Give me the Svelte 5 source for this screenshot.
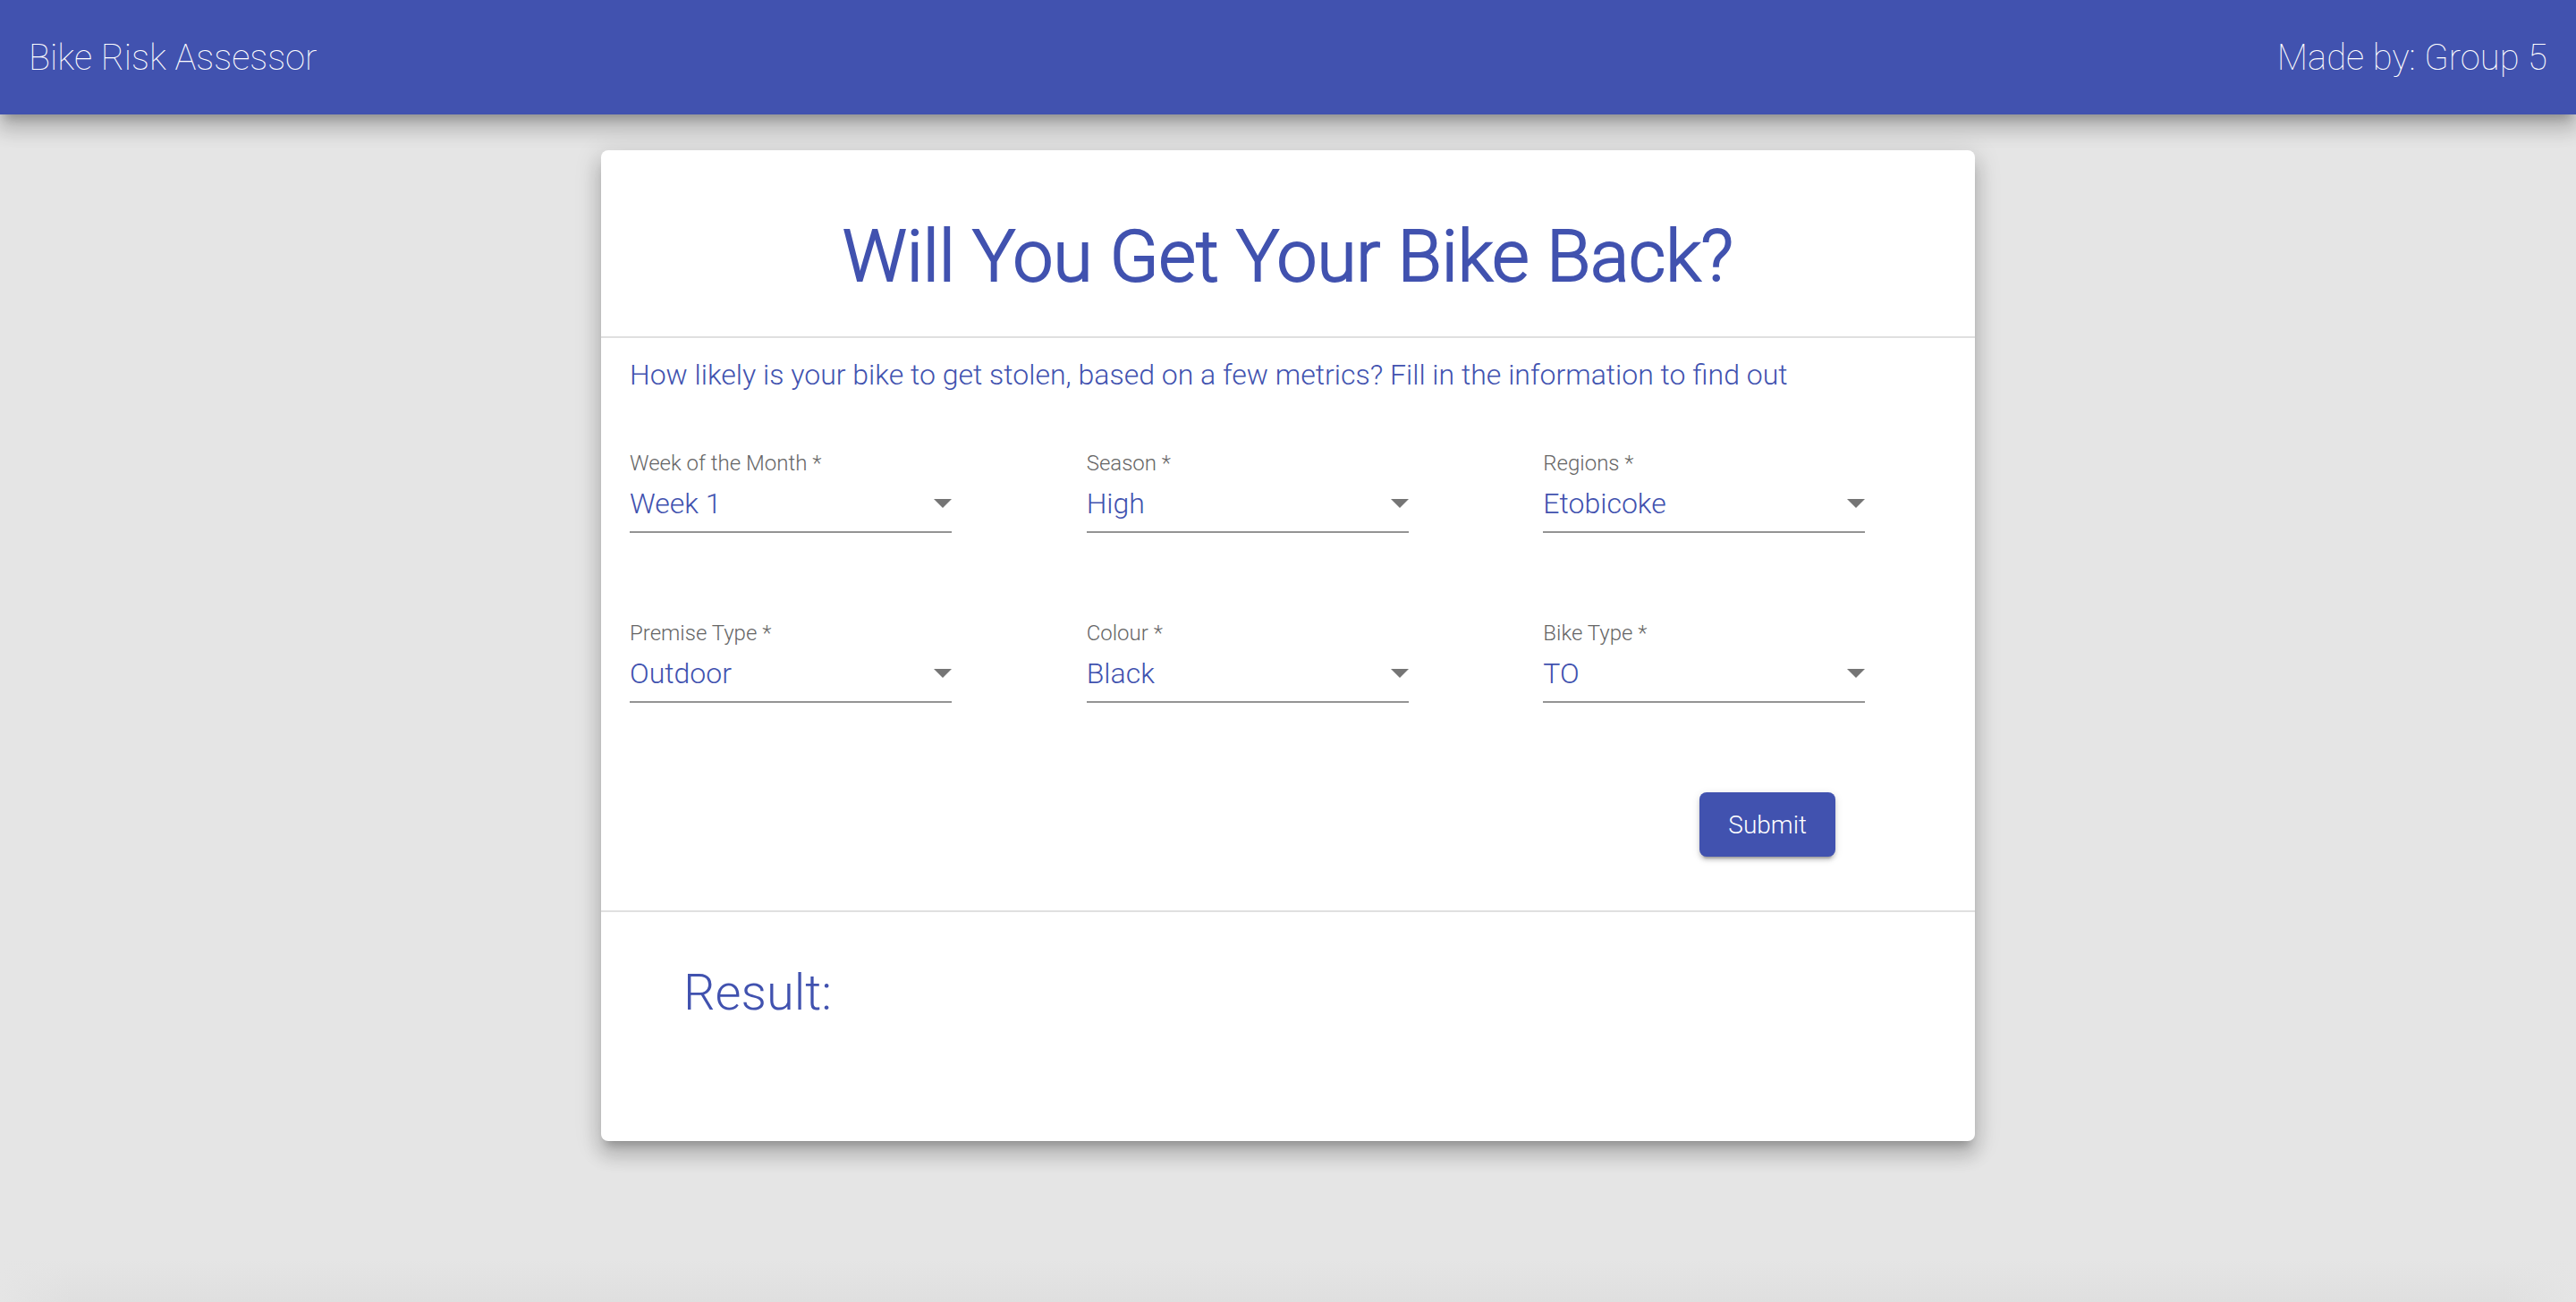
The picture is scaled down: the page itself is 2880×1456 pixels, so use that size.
<script>
  let fields = $state([
    { id: 'week', label: 'Week of the Month', value: 'Week 1', options: ['Week 1', 'Week 2', 'Week 3', 'Week 4'] },
    { id: 'season', label: 'Season', value: 'High', options: ['High', 'Low'] },
    { id: 'region', label: 'Regions', value: 'Etobicoke', options: ['Etobicoke', 'North York', 'Scarborough'] },
    { id: 'premise', label: 'Premise Type', value: 'Outdoor', options: ['Outdoor', 'House', 'Apartment'] },
    { id: 'colour', label: 'Colour', value: 'Black', options: ['Black', 'Blue', 'Red', 'White'] },
    { id: 'bike', label: 'Bike Type', value: 'TO', options: ['TO', 'MT', 'RG', 'RC'] }
  ]);

  function submit(event) {
    event.preventDefault();
  }
</script>

<div class="page">
  <header class="toolbar">
    <span>Bike Risk Assessor</span>
    <span>Made by: Group 5</span>
  </header>

  <main class="card">
    <h1>Will You Get Your Bike Back?</h1>
    <form onsubmit={submit}>
      <p class="intro">How likely is your bike to get stolen, based on a few metrics? Fill in the information to find out</p>
      <div class="fields">
        {#each fields as field (field.id)}
          <div class="field">
            <label for={field.id}>{field.label} *</label>
            <div class="control">
              <select id={field.id} bind:value={field.value} required>
                {#each field.options as option}
                  <option value={option}>{option}</option>
                {/each}
              </select>
              <svg class="arrow" viewBox="0 0 20 10" aria-hidden="true"><path d="M0 0H20L10 10Z" /></svg>
            </div>
          </div>
        {/each}
      </div>
      <div class="actions">
        <button type="submit">Submit</button>
      </div>
    </form>
    <section class="result">
      <h2>Result:</h2>
    </section>
  </main>

  <footer class="fade"></footer>
</div>

<style>
  :global(body) {
    background: #e5e5e5;
  }

  .page {
    display: flex;
    flex-direction: column;
    min-height: 100vh;
    font-family: Roboto, sans-serif;
    font-weight: 300;
    color: #4152af;
  }

  .toolbar {
    display: flex;
    align-items: center;
    justify-content: space-between;
    height: 128px;
    padding: 0 32px;
    background: #4152af;
    color: #fff;
    font-size: 40px;
    font-weight: 100;
    box-shadow:
      0 10px 10px -6px rgba(0, 0, 0, 0.2),
      0 16px 20px 2px rgba(0, 0, 0, 0.14),
      0 6px 28px 4px rgba(0, 0, 0, 0.12);
  }

  .card {
    box-sizing: border-box;
    width: 100%;
    max-width: 1536px;
    margin: 40px auto 0;
    background: #fff;
    border-radius: 8px;
    box-shadow:
      0 10px 10px -6px rgba(0, 0, 0, 0.2),
      0 16px 20px 2px rgba(0, 0, 0, 0.14),
      0 6px 28px 4px rgba(0, 0, 0, 0.12);
  }

  h1 {
    margin: 0;
    padding: 69px 32px 39px;
    text-align: center;
    font-size: 80px;
    line-height: 100px;
    font-weight: 300;
    -webkit-text-stroke: 2px currentColor;
  }

  form {
    border-top: 2px solid #e0e0e0;
    border-bottom: 2px solid #e0e0e0;
    padding-bottom: 60px;
  }

  .intro {
    margin: 0;
    padding: 21px 32px 0;
    font-size: 32px;
    line-height: 40px;
  }

  .fields {
    display: grid;
    grid-template-columns: repeat(3, 1fr);
    gap: 96px 28px;
    padding: 63px 0 0 32px;
  }

  .field {
    display: flex;
    flex-direction: column;
    gap: 2px;
    max-width: 360px;
  }

  label {
    font-size: 24px;
    line-height: 32px;
    font-weight: 300;
    color: #666;
  }

  .control {
    display: grid;
    align-items: center;
    border-bottom: 2px solid #949494;
    padding: 5px 0 9px;
  }

  select {
    grid-area: 1 / 1;
    width: 100%;
    height: 44px;
    margin: 0;
    padding: 0;
    border: 0;
    background: none;
    appearance: none;
    font: inherit;
    font-size: 32px;
    color: inherit;
  }

  .arrow {
    grid-area: 1 / 1;
    justify-self: end;
    width: 20px;
    height: 10px;
    fill: #757575;
    pointer-events: none;
  }

  .actions {
    display: flex;
    justify-content: flex-end;
    padding: 100px 156px 0 32px;
  }

  button {
    height: 72px;
    padding: 0 32px;
    border: 0;
    border-radius: 8px;
    background: #4152af;
    color: #fff;
    font: inherit;
    font-size: 28px;
    box-shadow:
      0 6px 2px -4px rgba(0, 0, 0, 0.2),
      0 4px 4px 0 rgba(0, 0, 0, 0.14),
      0 2px 10px 0 rgba(0, 0, 0, 0.12);
  }

  .result {
    padding: 54px 92px 130px;
  }

  h2 {
    margin: 0;
    font-size: 56px;
    line-height: 72px;
    font-weight: 300;
  }

  .fade {
    height: 48px;
    margin-top: auto;
    background:
      linear-gradient(to right, #e5e5e5, transparent 80px, transparent calc(100% - 80px), #e5e5e5),
      linear-gradient(#e5e5e5, #dfdfdf);
  }
</style>
